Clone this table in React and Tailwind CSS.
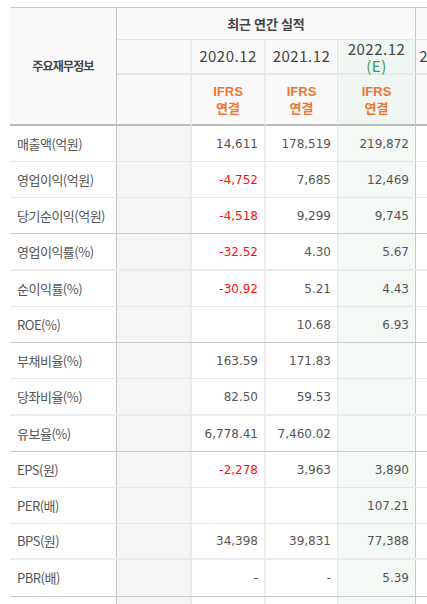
import React from "react";

const KR = { fontFamily: '"Noto Sans CJK KR", "Noto Sans", sans-serif' };
const NUM = { fontFamily: '"DejaVu Sans", "Liberation Sans", sans-serif' };

const rows = [
  { label: "매출액(억원)", v: ["14,611", "178,519", "219,872"], neg: [0, 0, 0], h: "h-[36px]", b: "border-b border-[#e6e6e6]" },
  { label: "영업이익(억원)", v: ["-4,752", "7,685", "12,469"], neg: [1, 0, 0], h: "h-[36px]", b: "border-b border-[#e6e6e6]" },
  { label: "당기순이익(억원)", v: ["-4,518", "9,299", "9,745"], neg: [1, 0, 0], h: "h-[36px]", b: "border-b border-[#c9c9c9]" },
  { label: "영업이익률(%)", v: ["-32.52", "4.30", "5.67"], neg: [1, 0, 0], h: "h-[37px]", b: "border-b-2 border-[#ebebeb]" },
  { label: "순이익률(%)", v: ["-30.92", "5.21", "4.43"], neg: [1, 0, 0], h: "h-[36px]", b: "border-b border-[#e6e6e6]" },
  { label: "ROE(%)", v: ["", "10.68", "6.93"], neg: [0, 0, 0], h: "h-[36px]", b: "border-b border-[#c9c9c9]" },
  { label: "부채비율(%)", v: ["163.59", "171.83", ""], neg: [0, 0, 0], h: "h-[36px]", b: "border-b border-[#e6e6e6]" },
  { label: "당좌비율(%)", v: ["82.50", "59.53", ""], neg: [0, 0, 0], h: "h-[37px]", b: "border-b-2 border-[#ebebeb]" },
  { label: "유보율(%)", v: ["6,778.41", "7,460.02", ""], neg: [0, 0, 0], h: "h-[36px]", b: "border-b border-[#c9c9c9]" },
  { label: "EPS(원)", v: ["-2,278", "3,963", "3,890"], neg: [1, 0, 0], h: "h-[36px]", b: "border-b border-[#e6e6e6]" },
  { label: "PER(배)", v: ["", "", "107.21"], neg: [0, 0, 0], h: "h-[36px]", b: "border-b border-[#e6e6e6]" },
  { label: "BPS(원)", v: ["34,398", "39,831", "77,388"], neg: [0, 0, 0], h: "h-[36px]", b: "border-b-2 border-[#ebebeb]" },
  { label: "PBR(배)", v: ["-", "-", "5.39"], neg: [0, 0, 0], h: "h-[37px]", b: "border-b border-[#c9c9c9]" },
  { label: "", v: ["", "", ""], neg: [0, 0, 0], h: "h-[36px]", b: "border-b border-[#e6e6e6]" },
];

function Num({ value, neg, className }) {
  return (
    <div
      className={`flex items-center justify-end pr-[6px] text-[12px] ${neg ? "text-[#ff1010]" : "text-[#555555]"} ${className}`}
      style={NUM}
    >
      {value}
    </div>
  );
}

export default function App() {
  return (
    <div className="w-[427px] h-[604px] overflow-hidden bg-white pt-[7px] pl-[10px]">
      <div className="w-[480px]">
        {/* Header */}
        <div className="grid grid-cols-[107px_75px_74px_72px_78px_64px] grid-rows-[32px_35px_51px] border-t border-[#c8c8c8]">
          <div
            className="row-span-3 bg-[#f9f9f9] border-r border-[#c4c4c4] border-b-2 border-b-[#bbbbbb] flex items-center justify-center text-[12px] font-bold tracking-[-0.8px] text-[#444]"
            style={KR}
          >
            주요재무정보
          </div>
          <div
            className="col-span-4 bg-[#f9f9f9] border-b border-[#e6e6e6] border-r border-r-[#c8c8c8] flex items-center justify-center text-[13px] font-bold text-[#444]"
            style={KR}
          >
            최근 연간 실적
          </div>
          <div className="bg-[#f9f9f9] border-b border-[#e6e6e6]" />

          {/* years */}
          <div className="bg-[#f9f9f9] border-b-2 border-[#e8e8e8] border-r-2 border-r-[#ececec]" />
          <div className="bg-[#f9f9f9] border-b-2 border-[#e8e8e8] border-r-2 border-r-[#ececec] flex items-center justify-center text-[15px] tracking-[0.5px] text-[#444]" style={KR}>
            2020.12
          </div>
          <div className="bg-[#f9f9f9] border-b-2 border-[#e8e8e8] border-r border-r-[#e8e8e8] flex items-center justify-center text-[15px] tracking-[0.5px] text-[#444]" style={KR}>
            2021.12
          </div>
          <div className="bg-[#f0f6f1] border-b-2 border-[#e8e8e8] border-r border-r-[#c8c8c8] flex flex-col items-center justify-center text-[15px] leading-[17px] tracking-[0.5px] text-[#444]" style={KR}>
            <span>2022.12</span>
            <span className="text-[#3c9b55]">(E)</span>
          </div>
          <div className="bg-[#f9f9f9] border-b-2 border-[#e8e8e8] flex items-center justify-center text-[15px] tracking-[0.5px] text-[#444] whitespace-nowrap" style={KR}>
            2021.09
          </div>

          {/* IFRS */}
          <div className="bg-[#f9f9f9] border-b-2 border-[#bbbbbb] border-r-2 border-r-[#ececec]" />
          {["a", "b", "c"].map((k, i) => (
            <div
              key={k}
              className={`border-b-2 border-[#bbbbbb] flex flex-col items-center justify-center text-[13px] leading-[16px] font-bold text-[#f07530] ${
                i === 0
                  ? "bg-[#f9f9f9] border-r-2 border-r-[#ececec]"
                  : i === 1
                  ? "bg-[#f9f9f9] border-r border-r-[#e8e8e8]"
                  : "bg-[#f0f6f1] border-r border-r-[#c8c8c8]"
              }`}
              style={KR}
            >
              <span style={{ fontFamily: '"Liberation Sans", sans-serif' }}>IFRS</span>
              <span>연결</span>
            </div>
          ))}
          <div className="bg-[#f9f9f9] border-b-2 border-[#bbbbbb]" />
        </div>

        {/* Body */}
        {rows.map((r, idx) => (
          <div key={idx} className={`flex ${r.h} ${r.b}`}>
            <div
              className="w-[107px] shrink-0 border-r border-[#c4c4c4] flex items-center pl-[7px] text-[13px] tracking-[-0.5px] text-[#555]"
              style={KR}
            >
              {r.label}
            </div>
            <div className="w-[75px] shrink-0 bg-[#f5f5f5] border-r-2 border-[#ececec]" />
            <Num value={r.v[0]} neg={r.neg[0]} className="w-[74px] shrink-0 border-r-2 border-[#ededed]" />
            <Num value={r.v[1]} neg={r.neg[1]} className="w-[72px] shrink-0 border-r border-[#e8e8e8]" />
            <Num value={r.v[2]} neg={r.neg[2]} className="w-[78px] shrink-0 bg-[#f4f9f5] border-r border-[#c8c8c8]" />
            <div className="w-[64px] shrink-0" />
          </div>
        ))}
      </div>
    </div>
  );
}
